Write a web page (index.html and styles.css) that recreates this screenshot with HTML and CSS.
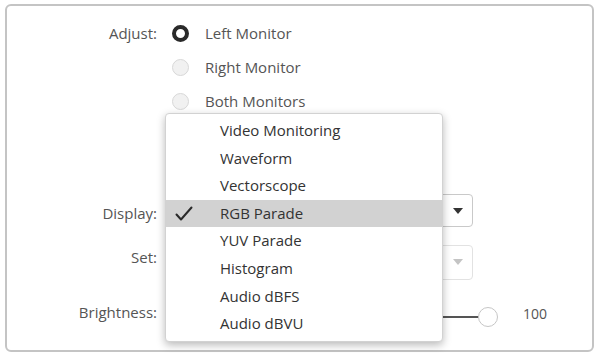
FILE: index.html
```html
<!DOCTYPE html>
<html>
<head>
<meta charset="utf-8">
<link rel="stylesheet" href="styles.css">
</head>
<body>
<div class="panel">
  <div class="row">
    <div class="label">Adjust:</div>
    <div class="control"><span class="radio on"></span><span class="opt">Left Monitor</span></div>
  </div>
  <div class="row">
    <div class="label"></div>
    <div class="control"><span class="radio"></span><span class="opt">Right Monitor</span></div>
  </div>
  <div class="row">
    <div class="label"></div>
    <div class="control"><span class="radio"></span><span class="opt">Both Monitors</span></div>
  </div>
  <div class="spacer"></div>
  <div class="row">
    <div class="label">Display:</div>
    <div class="control"><div class="select"><span class="arrow"></span></div></div>
  </div>
  <div class="row row-set">
    <div class="label">Set:</div>
    <div class="control"><div class="select disabled"><span class="arrow"></span></div></div>
  </div>
  <div class="row row-bright">
    <div class="label">Brightness:</div>
    <div class="control"><div class="slider"><div class="track"></div><div class="thumb"></div></div><span class="num">100</span></div>
  </div>

  <div class="menu">
    <div class="item">Video Monitoring</div>
    <div class="item">Waveform</div>
    <div class="item">Vectorscope</div>
    <div class="item sel"><svg class="check" width="18" height="16" viewBox="0 0 18 16"><path d="M1.5 8.5 L6 13.5 L16.5 1.5" fill="none" stroke="#2a2a2a" stroke-width="2" stroke-linecap="round" stroke-linejoin="round"/></svg>RGB Parade</div>
    <div class="item">YUV Parade</div>
    <div class="item">Histogram</div>
    <div class="item">Audio dBFS</div>
    <div class="item">Audio dBVU</div>
  </div>
</div>
</body>
</html>
```
FILE: styles.css
```css
html, body {
  margin: 0;
  padding: 0;
  background: #ffffff;
}
body {
  font-family: "Open Sans", "Noto Sans", sans-serif;
  font-size: 15px;
  color: #555;
  width: 598px;
  height: 353px;
  overflow: hidden;
}
.panel {
  position: relative;
  margin: 4px 4px 0 5px;
  height: 348px;
  box-sizing: border-box;
  border: 2px solid #c4c4c4;
  border-radius: 6px;
  padding-top: 10px;
}
.row {
  display: flex;
  align-items: center;
  height: 34px;
}
.label {
  width: 150px;
  text-align: right;
  color: #555;
  flex: none;
}
.control {
  margin-left: 15px;
  display: flex;
  align-items: center;
  flex: none;
}
.radio {
  width: 17px;
  height: 17px;
  box-sizing: border-box;
  border-radius: 50%;
  border: 1px solid #d8d8d8;
  background: #f1f1f1;
  margin-right: 16px;
}
.radio.on {
  border: 4.5px solid #2a2a2a;
  background: #fff;
}
.opt {
  color: #555;
}
.spacer {
  height: 78px;
}
.select {
  width: 301px;
  height: 33px;
  box-sizing: border-box;
  border: 1px solid #c9c9c9;
  border-radius: 4px;
  display: flex;
  align-items: center;
  justify-content: flex-end;
  padding: 0 9px 0 10px;
  background: #fff;
  margin-top: -5px;
}
.select.disabled {
  height: 35px;
  border-color: #e2e2e2;
  margin-top: 10px;
}
.arrow {
  width: 0;
  height: 0;
  border-left: 5px solid transparent;
  border-right: 5px solid transparent;
  border-top: 6px solid #333;
}
.select.disabled .arrow {
  border-top-color: #c4c4c4;
}
.row-set {
  margin-top: 10px;
}
.row-bright {
  margin-top: 21px;
}
.slider {
  position: relative;
  width: 327px;
  height: 22px;
  display: flex;
  align-items: center;
  margin-top: 10px;
}
.track {
  width: 308px;
  height: 2px;
  background: #555;
}
.thumb {
  width: 20px;
  height: 20px;
  box-sizing: border-box;
  border-radius: 50%;
  border: 1px solid #c6c6c6;
  background: #fff;
  margin-left: -2px;
}
.num {
  margin-left: 24px;
  color: #555;
  font-size: 14px;
  margin-top: 2px;
}
.menu {
  position: absolute;
  left: 158px;
  top: 107px;
  width: 278px;
  box-sizing: border-box;
  padding: 3px 0;
  background: #fff;
  border: 1px solid #d2d2d2;
  border-radius: 4px;
  box-shadow: 0 3px 9px rgba(0, 0, 0, 0.28);
}
.item {
  position: relative;
  height: 27.6px;
  line-height: 27.6px;
  padding-left: 54px;
  color: #333;
}
.item.sel {
  background: #d2d2d2;
}
.check {
  position: absolute;
  left: 9px;
  top: 6px;
}
```
